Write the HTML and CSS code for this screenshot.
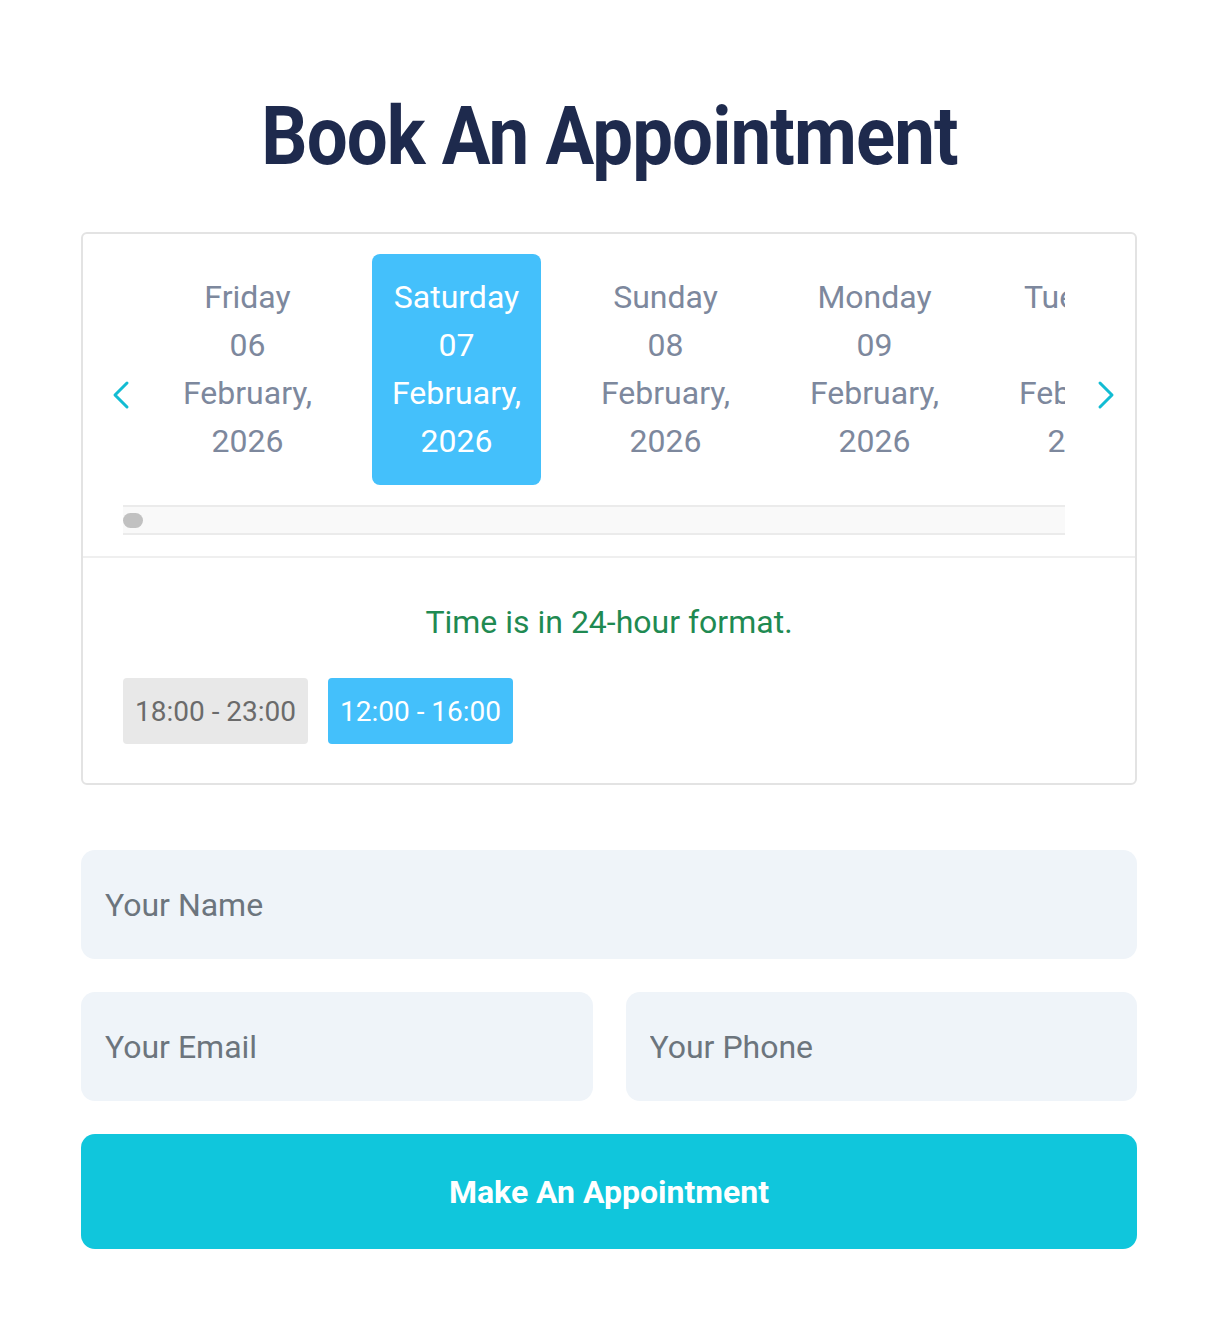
FILE: index.html
```html
<!DOCTYPE html>
<html lang="en">
<head>
<meta charset="utf-8">
<title>Book An Appointment</title>
<link rel="stylesheet" href="styles.css">
</head>
<body>
<main class="page">
  <h1 class="title"><span>Book An Appointment</span></h1>

  <section class="card">
    <div class="dates">
      <div class="slider">
        <div class="track">
          <div class="day">Friday<br>06<br>February,<br>2026</div>
          <div class="day active">Saturday<br>07<br>February,<br>2026</div>
          <div class="day">Sunday<br>08<br>February,<br>2026</div>
          <div class="day">Monday<br>09<br>February,<br>2026</div>
          <div class="day">Tuesday<br>10<br>February,<br>2026</div>
        </div>
        <div class="scrollbar"><div class="thumb"></div></div>
      </div>
      <button class="arrow arrow-left" aria-label="Previous">
        <svg viewBox="0 0 20 30" width="20" height="30"><path d="M16 3 L4 15 L16 27" fill="none" stroke="#12bcd3" stroke-width="3" stroke-linecap="round" stroke-linejoin="round"/></svg>
      </button>
      <button class="arrow arrow-right" aria-label="Next">
        <svg viewBox="0 0 20 30" width="20" height="30"><path d="M4 3 L16 15 L4 27" fill="none" stroke="#12bcd3" stroke-width="3" stroke-linecap="round" stroke-linejoin="round"/></svg>
      </button>
    </div>
    <div class="times">
      <p class="note">Time is in 24-hour format.</p>
      <div class="slots">
        <span class="slot">18:00 - 23:00</span>
        <span class="slot active">12:00 - 16:00</span>
      </div>
    </div>
  </section>

  <form class="form">
    <input class="field" type="text" placeholder="Your Name">
    <div class="row">
      <input class="field" type="email" placeholder="Your Email">
      <input class="field" type="tel" placeholder="Your Phone">
    </div>
    <button class="submit" type="button">Make An Appointment</button>
  </form>
</main>
</body>
</html>
```
FILE: styles.css
```css
* { box-sizing: border-box; }
html, body { margin: 0; padding: 0; background: #fff; }
body { font-family: Roboto, "Noto Sans", Arial, sans-serif; }

.page {
  width: 1056px;
  margin: 0 auto;
  padding: 88px 0 70px;
  position: relative;
  left: -1px;
}

.title {
  margin: 0 0 48px;
  text-align: center;
  font-size: 82px;
  line-height: 96px;
  font-weight: 700;
  color: #1e2a4d;
  letter-spacing: -1px;
  white-space: nowrap;
}
.title span { display: inline-block; transform: scaleX(0.885); }

.card {
  border: 2px solid #e3e3e3;
  border-radius: 6px;
}

.dates {
  position: relative;
  padding: 20px 0 21px 40px;
  border-bottom: 2px solid #efefef;
}
.arrow {
  position: absolute;
  top: 50%;
  width: 20px;
  height: 30px;
  margin-top: -15px;
  border: 0;
  background: none;
  padding: 0;
  cursor: pointer;
}
.arrow svg { display: block; }
.arrow-left { left: 28px; }
.arrow-right { left: 1013px; }

.slider {
  width: 942px;
  overflow: hidden;
}
.track {
  display: flex;
  gap: 40px;
  padding-left: 40px;
}
.day {
  flex: 0 0 169px;
  padding: 19px 0 20px;
  text-align: center;
  font-size: 32px;
  line-height: 48px;
  color: #7d889d;
  border-radius: 8px;
  white-space: nowrap;
  overflow: hidden;
}
.day.active { background: #44c0fb; color: #fff; }

.scrollbar {
  margin-top: 20px;
  height: 30px;
  background: #f9f9f9;
  border-top: 2px solid #ebebeb;
  border-bottom: 2px solid #ebebeb;
  display: flex;
  align-items: center;
}
.thumb {
  width: 20px;
  height: 15px;
  border-radius: 8px;
  background: #c1c1c1;
}

.times { padding: 44px 40px 39px; }
.note {
  margin: 0 0 36px;
  text-align: center;
  font-size: 32px;
  line-height: 40px;
  color: #1f8a52;
}
.slots { display: flex; gap: 20px; }
.slot {
  width: 185px;
  height: 66px;
  border-radius: 4px;
  background: #e8e8e8;
  color: #6b6b6b;
  font-size: 28px;
  display: flex;
  align-items: center;
  justify-content: center;
}
.slot.active { background: #44c0fb; color: #fff; }

.form {
  margin-top: 65px;
  display: flex;
  flex-direction: column;
  gap: 33px;
}
.row { display: grid; grid-template-columns: 1fr 1fr; gap: 33px; }
.field {
  width: 100%;
  height: 109px;
  border: 0;
  border-radius: 14px;
  background: #eff4f9;
  padding: 0 24px;
  font-family: Roboto, "Noto Sans", Arial, sans-serif;
  font-size: 32px;
  color: #333;
  outline: none;
}
.field::placeholder { color: #6c757d; opacity: 1; }
.submit {
  height: 115px;
  border: 0;
  border-radius: 14px;
  background: #10c6dc;
  color: #fff;
  font-family: Roboto, "Noto Sans", Arial, sans-serif;
  font-weight: 700;
  font-size: 32px;
  cursor: pointer;
}
```
